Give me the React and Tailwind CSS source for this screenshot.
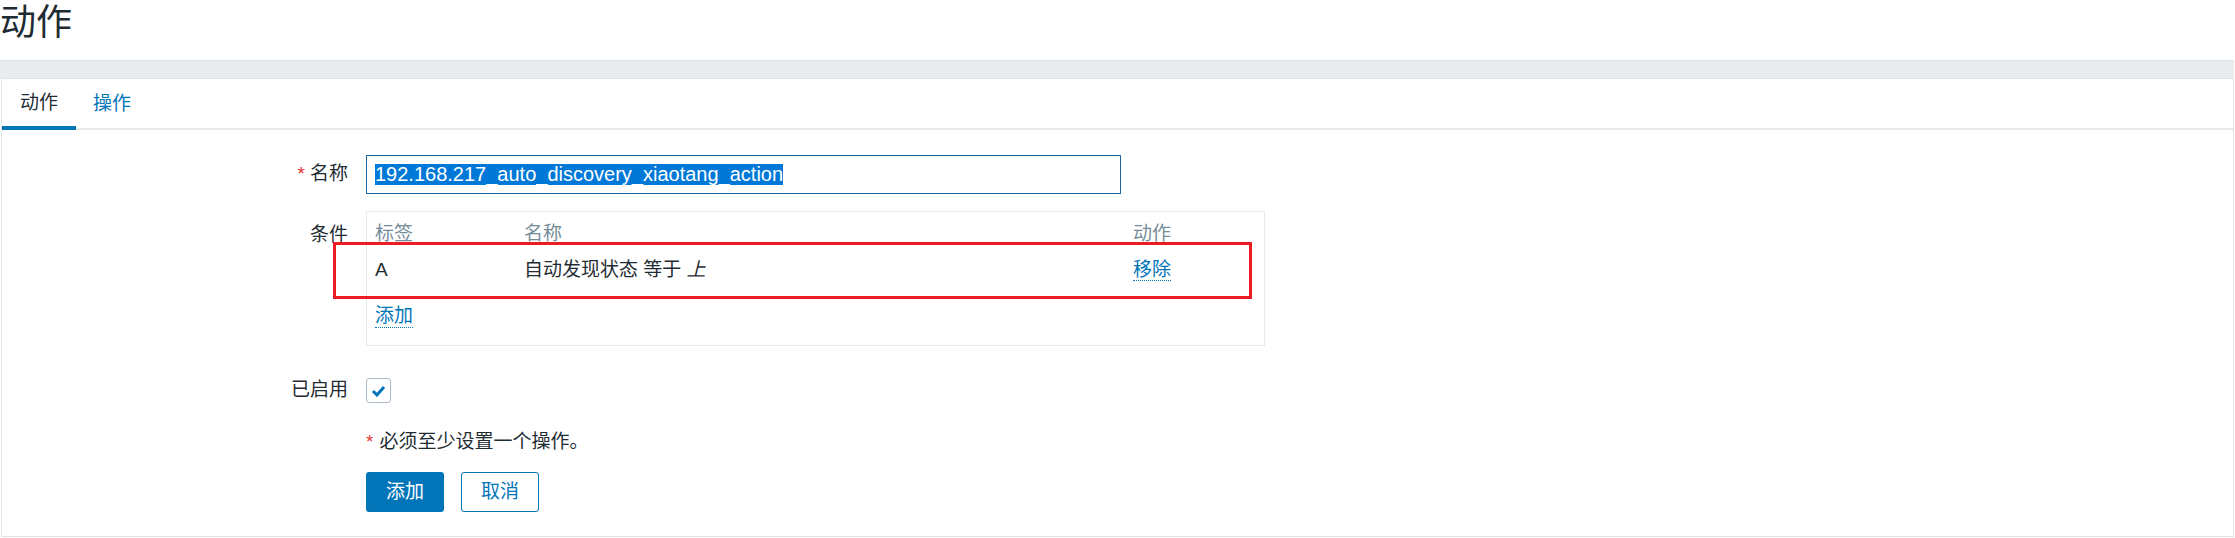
import React from 'react';

const font = "font-['Liberation_Sans','Noto_Sans_CJK_SC',sans-serif]";

function Label({ children, required }) {
    return (
        <div className="text-right text-[#1f2c33] whitespace-nowrap">
            {required && <span className="text-[#e33734] mr-[5px]">*</span>}
            {children}
        </div>
    );
}

function DottedLink({ children }) {
    return (
        <span className="text-[#0275b8] border-b border-dotted border-[#0275b8] leading-[22px]">{children}</span>
    );
}

export default function App() {
    return (
        <div className={`${font} w-[2234px] bg-white text-[19px] text-[#1f2c33]`}>
            {/* page title */}
            <div className="h-[60px] text-[36px] leading-[46px] text-[#1f2c33]">动作</div>

            <div className="h-[18px] bg-[#e8ecef] border-t border-[#dfe3e6]" />

            {/* panel */}
            <div className="border border-[#dfe3e6] ml-px">
                {/* tabs */}
                <div className="flex border-b-2 border-[#e6e9eb] h-[51px]">
                    <div className="px-[18px] flex items-center border-b-4 border-[#0275b8] -mb-[2px] pt-[2px]">动作</div>
                    <div className="px-[17px] flex items-center text-[#0275b8] pt-[2px]">操作</div>
                </div>

                {/* form */}
                <div className="grid grid-cols-[346px_1fr] gap-x-[18px] pt-[25px] pb-[24px]">
                    <div className="h-[39px] flex items-center justify-end">
                        <Label required>名称</Label>
                    </div>
                    <div>
                        <div className="w-[755px] h-[39px] border border-[#1f65a0] flex items-center pl-[8px]">
                            <span className="bg-[#0078d7] text-white text-[20px] leading-[21px]">192.168.217_auto_discovery_xiaotang_action</span>
                        </div>
                    </div>

                    <div className="mt-[17px] pt-[10px]">
                        <Label>条件</Label>
                    </div>
                    <div className="mt-[17px]">
                        <div className="relative w-[899px] border border-[#e6e9eb] pt-[5px] pb-[11px] px-[8px]">
                            <div className="grid grid-cols-[149px_609px_1fr] h-[34px] items-center text-[#768d99]">
                                <div>标签</div>
                                <div>名称</div>
                                <div>动作</div>
                            </div>
                            <div className="grid grid-cols-[149px_609px_1fr] h-[38px] items-center">
                                <div>A</div>
                                <div>自动发现状态 等于 <span className="italic">上</span></div>
                                <div><DottedLink>移除</DottedLink></div>
                            </div>
                            <div className="h-[36px] mt-[9px] flex items-center">
                                <DottedLink>添加</DottedLink>
                            </div>
                            <div className="absolute left-[-34px] top-[30px] w-[919px] h-[57px] border-[3px] border-[#ed1c24] pointer-events-none" />
                        </div>
                    </div>

                    <div className="mt-[32px] h-[25px] flex items-center justify-end">
                        <Label>已启用</Label>
                    </div>
                    <div className="mt-[32px]">
                        <div className="w-[25px] h-[25px] border border-[#acbbc7] rounded-[3px] flex items-center justify-center">
                            <svg width="15" height="12" viewBox="0 0 15 12">
                                <polyline points="2,6 6,10 13,2" fill="none" stroke="#0275b8" strokeWidth="3" />
                            </svg>
                        </div>
                    </div>

                    <div />
                    <div className="mt-[27px] h-[24px] flex items-center">
                        <span className="text-[#e33734] mr-[6px]">*</span>必须至少设置一个操作。
                    </div>

                    <div />
                    <div className="mt-[18px] flex gap-[17px]">
                        <button className="w-[78px] h-[40px] bg-[#0275b8] text-white rounded-[3px]">添加</button>
                        <button className="w-[78px] h-[40px] bg-white text-[#0275b8] border border-[#0275b8] rounded-[3px]">取消</button>
                    </div>
                </div>
            </div>
        </div>
    );
}
